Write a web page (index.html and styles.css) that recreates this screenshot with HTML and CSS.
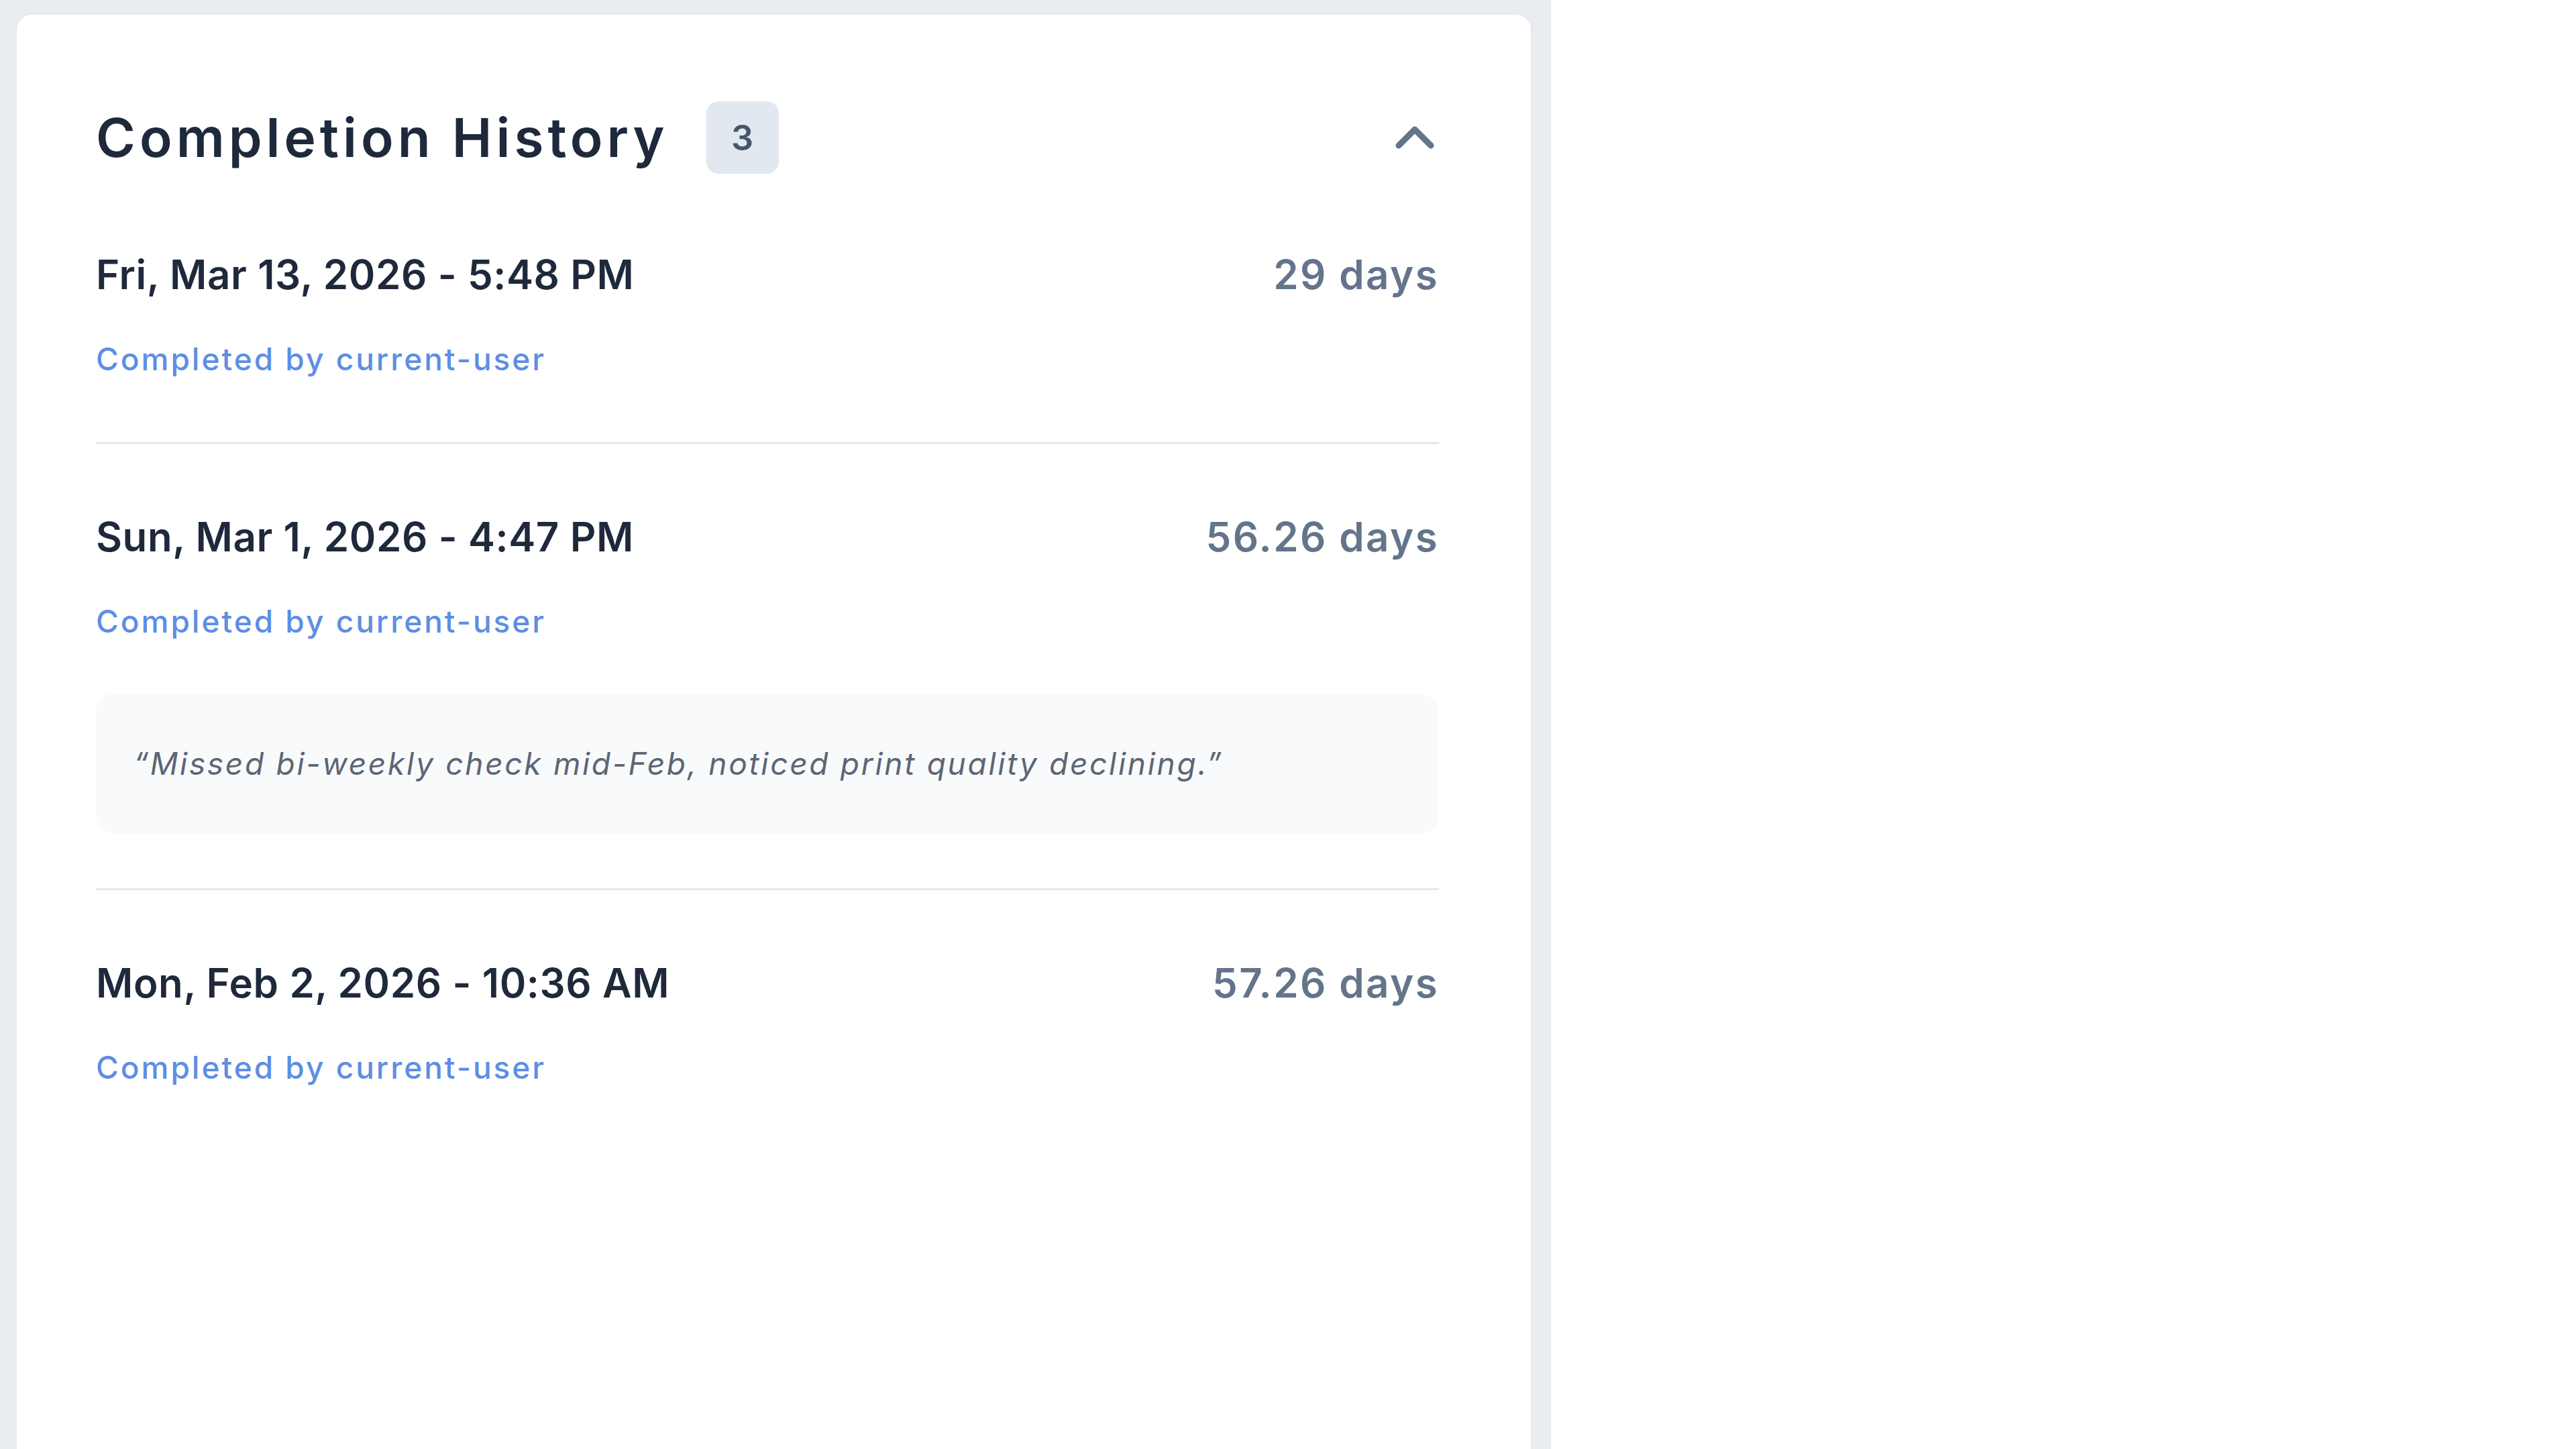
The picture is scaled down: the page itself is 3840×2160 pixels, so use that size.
FILE: index.html
```html
<!DOCTYPE html>
<html lang="en">
<head>
<meta charset="utf-8">
<title>Completion History</title>
<link rel="stylesheet" href="styles.css">
</head>
<body>
<div class="layout">
  <main class="pane">
    <section class="card">
      <header class="card-header">
        <div class="title-group">
          <h2 class="title">Completion History</h2>
          <span class="badge">3</span>
        </div>
        <button class="collapse" aria-label="Collapse">
          <svg class="chevron" width="58" height="34" viewBox="0 0 58 34" fill="none" stroke="currentColor" stroke-width="9" stroke-linecap="round" stroke-linejoin="round"><path d="M5 29 L29 5 L53 29"/></svg>
        </button>
      </header>
      <ul class="history">
        <li class="entry">
          <div class="entry-top">
            <span class="date">Fri, Mar 13, 2026 - 5:48 PM</span>
            <span class="interval">29 days</span>
          </div>
          <div class="by">Completed by current-user</div>
        </li>
        <li class="entry">
          <div class="entry-top">
            <span class="date">Sun, Mar 1, 2026 - 4:47 PM</span>
            <span class="interval">56.26 days</span>
          </div>
          <div class="by">Completed by current-user</div>
          <p class="note">“Missed bi-weekly check mid-Feb, noticed print quality declining.”</p>
        </li>
        <li class="entry">
          <div class="entry-top">
            <span class="date">Mon, Feb 2, 2026 - 10:36 AM</span>
            <span class="interval">57.26 days</span>
          </div>
          <div class="by">Completed by current-user</div>
        </li>
      </ul>
    </section>
  </main>
  <aside class="blank"></aside>
</div>
</body>
</html>
```
FILE: styles.css
```css
* { box-sizing: border-box; }
html, body {
  margin: 0;
  padding: 0;
  height: 2160px;
  overflow: hidden;
  background: #ffffff;
  font-family: Inter, "Noto Sans", "Liberation Sans", sans-serif;
}
.layout {
  display: flex;
  height: 2160px;
}
.pane {
  width: 2312px;
  flex: none;
  background: #e9ecf0;
  padding: 22px 30px 0 25px;
  overflow: hidden;
}
.blank {
  flex: 1;
  background: #ffffff;
}
.card {
  background: #ffffff;
  border-radius: 22px;
  min-height: 2300px;
  padding: 135px 137px 0 118px;
  box-shadow: 0 1px 4px rgba(15, 23, 42, 0.06);
}
.card-header {
  display: flex;
  align-items: center;
  justify-content: space-between;
  height: 96px;
  margin-bottom: 18px;
}
.title-group {
  display: flex;
  align-items: center;
}
.title {
  margin: 0;
  font-size: 80px;
  line-height: 96px;
  font-weight: 600;
  color: #1e293b;
  letter-spacing: 6px;
}
.badge {
  margin-left: 56px;
  width: 108px;
  height: 108px;
  border-radius: 18px;
  background: #e2e8f0;
  color: #475569;
  font-size: 52px;
  font-weight: 600;
  display: flex;
  align-items: center;
  justify-content: center;
}
.collapse {
  border: 0;
  background: none;
  padding: 0;
  margin-right: 7px;
  color: #64748b;
  display: flex;
}
.history {
  list-style: none;
  margin: 0;
  padding: 0;
}
.entry {
  padding: 102px 0 81px;
  border-bottom: 3px solid #e2e8f0;
}
.entry:last-child {
  border-bottom: 0;
}
.entry-top {
  display: flex;
  justify-content: space-between;
  align-items: center;
  height: 72px;
}
.date {
  font-size: 60px;
  line-height: 72px;
  font-weight: 600;
  color: #1e293b;
  letter-spacing: 0.6px;
}
.interval {
  font-size: 60px;
  line-height: 72px;
  font-weight: 600;
  color: #64748b;
  letter-spacing: 2.4px;
}
.by {
  margin-top: 47px;
  font-size: 46px;
  line-height: 86px;
  font-weight: 500;
  color: #5d8ee3;
  letter-spacing: 3px;
}
.note {
  margin: 65px 0 0;
  background: #f8fafc;
  border-radius: 28px;
  padding: 74px 56px 75px;
  font-size: 46px;
  line-height: 60px;
  font-style: italic;
  color: #5c6675;
  letter-spacing: 2.7px;
}
```
